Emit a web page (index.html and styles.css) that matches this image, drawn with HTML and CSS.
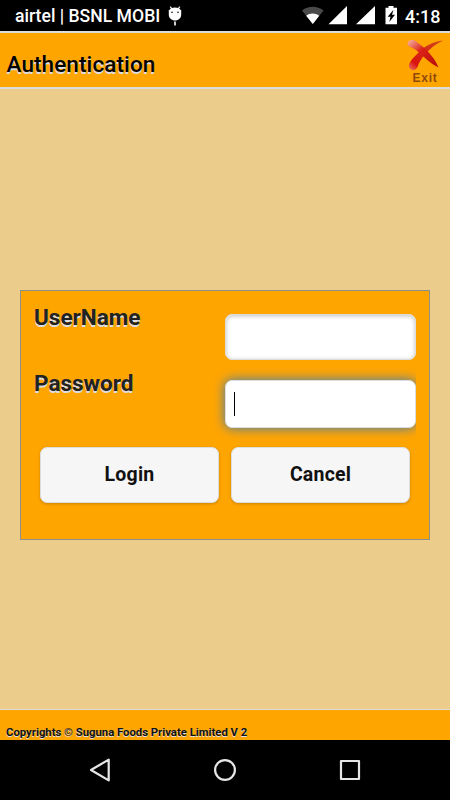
FILE: index.html
```
<!DOCTYPE html>
<html lang="en">
<head>
  <meta charset="UTF-8">
  <title>Authentication</title>
  <link rel="stylesheet" href="styles.css">
</head>
<body>

  <!-- Status bar -->
  <div class="status-bar">
    <span class="carrier">airtel | BSNL MOBI</span>
    <svg class="droid" width="14" height="20" viewBox="0 0 14 20">
      <path d="M2.2 0.6L4 3M11.8 0.6L10 3" stroke="#fff" stroke-width="1.2"/>
      <path d="M3 2.2Q7 0.8 11 2.2L13.2 4.5V8.5C13.2 12 10.5 14.5 7 14.5S0.8 12 0.8 8.5V4.5Z" fill="#fff"/>
      <circle cx="4" cy="6.3" r="0.8" fill="#000"/>
      <circle cx="10" cy="6.3" r="0.8" fill="#000"/>
      <path d="M7 15.5V19.5" stroke="#fff" stroke-width="1.6"/>
    </svg>
    <svg class="signals" width="96" height="20" viewBox="0 0 96 20">
      <path d="M0 4.6C6.5-0.4 15-0.4 21.5 4.6L10.8 18Z" fill="#4a4a4a"/>
      <path d="M4.2 9.8C8.2 6.8 13.2 6.8 17.2 9.8L10.8 18Z" fill="#fff"/>
      <path d="M26.5 18.3H45V0Z" fill="#fff"/>
      <path d="M54 18.3H73V0Z" fill="#fff"/>
      <path d="M83.5 1.8H86.5V0H91.5V1.8H95V18.3H83.5Z" fill="#fff"/>
      <path d="M91.5 3.8L85.6 10.8H88.5L87.3 16L93 8.8H90Z" fill="#000"/>
    </svg>
    <span class="clock">4:18</span>
  </div>

  <!-- Header -->
  <div class="header">
    <h1>Authentication</h1>
    <div class="exit">
      <svg width="38" height="32" viewBox="0 0 38 32">
        <defs>
          <linearGradient id="red" x1="0" y1="0" x2="1" y2="1">
            <stop offset="0" stop-color="#f7b9a6"/>
            <stop offset="0.4" stop-color="#dc2218"/>
            <stop offset="1" stop-color="#b50c08"/>
          </linearGradient>
          <linearGradient id="red2" x1="1" y1="0" x2="0" y2="1">
            <stop offset="0" stop-color="#cf4a1c"/>
            <stop offset="0.8" stop-color="#d9130e"/>
            <stop offset="1" stop-color="#ec7468"/>
          </linearGradient>
        </defs>
        <path d="M37 1.5C27 2.5 19 7 13 13C7 19 3 23 3 27C3.5 32 9.5 32 11.5 28C14 20 23 8 37 1.5Z" fill="url(#red2)"/>
        <path d="M1.5 4.5C2 1 7 0 10 2.5C18 8 28 17 32.5 28.5C24 24.5 17 17 10 11C6 8 1.5 8 1.5 4.5Z" fill="url(#red)"/>
      </svg>
      <span>Exit</span>
    </div>
  </div>

  <!-- Login form -->
  <div class="content">
    <form class="login-box">
      <div class="row">
        <label for="user">UserName</label>
        <input id="user" type="text">
      </div>
      <div class="row">
        <label for="pass">Password</label>
        <div class="focus-field"><div class="field"><span class="caret"></span></div></div>
      </div>
      <div class="buttons">
        <button type="button">Login</button>
        <button type="button">Cancel</button>
      </div>
    </form>
  </div>

  <div class="footer">Copyrights © Suguna Foods Private Limited V 2</div>

  <!-- Android navigation -->
  <div class="nav-bar">
    <svg width="450" height="60" viewBox="0 0 450 60" fill="none" stroke="#e6e6e6" stroke-width="2.2">
      <path d="M108.7 19.6V40.4L91 30Z" stroke-linejoin="round"/>
      <circle cx="225" cy="30" r="9.9"/>
      <rect x="341" y="21" width="18" height="18" stroke-linejoin="round"/>
    </svg>
  </div>

</body>
</html>
```
FILE: styles.css
```
* {
  box-sizing: border-box;
}

body {
  margin: 0;
  height: 800px;
  display: flex;
  flex-direction: column;
  overflow: hidden;
  background: #ebcc8b;
  font-family: Roboto, sans-serif;
}

.status-bar {
  height: 31px;
  flex: none;
  display: flex;
  align-items: center;
  padding: 1px 10px 0 15px;
  background: #000;
  color: #fff;
  font-size: 17.6px;
  font-weight: 500;
  white-space: nowrap;
}

.droid {
  margin-left: 8px;
}

.signals {
  margin-left: auto;
}

.clock {
  margin-left: 7px;
  font-size: 18px;
  width: 35px;
}

.header {
  height: 58px;
  flex: none;
  display: flex;
  justify-content: space-between;
  padding: 0 6px 0 6.5px;
  background: #ffa500;
  border-top: 2px solid #ddd;
  border-bottom: 2px solid #ddd;
}

h1 {
  margin: 17px 0 0;
  font-size: 22.5px;
  line-height: 28px;
  font-weight: 500;
  letter-spacing: 0.1px;
  color: #000;
  text-shadow: 0 1.5px 0 #ddd;
}

.exit {
  display: flex;
  flex-direction: column;
  align-items: center;
  padding-top: 6px;
  width: 38px;
}

.exit span {
  margin-top: 1px;
  font: bold 12px/12px "Liberation Sans", sans-serif;
  letter-spacing: 0.8px;
  color: #8f4a0b;
}

.content {
  flex: 1;
  padding: 201px 20px 0;
}

.login-box {
  height: 250px;
  padding: 12px 13px 0;
  background: #ffa500;
  border: 1px solid #8c8f8c;
}

.row {
  display: flex;
  justify-content: space-between;
  height: 66px;
}

label {
  font-size: 22.5px;
  line-height: 28px;
  font-weight: 700;
  color: #222;
  text-shadow: 0 1.5px 0 #ddd;
}

input,
.field {
  width: 191.5px;
  border: 1px solid #ddd;
  border-radius: 7px;
  background: #fff;
}

input {
  height: 46px;
  margin: 11px 0 0;
  outline: none;
  box-shadow: inset 0 1px 4px rgba(0, 0, 0, 0.25);
}

/* the glow is cut off on the right side of the field */
.focus-field {
  margin: -2px 0 0 -12px;
  padding: 13px 0 18px 12px;
  height: 78px;
  overflow: hidden;
}

.field {
  height: 48px;
  padding: 11px 0 0 8px;
  box-shadow: 0 0 12px #387bbe;
}

.caret {
  display: block;
  width: 1px;
  height: 24px;
  background: #000;
}

.buttons {
  display: flex;
  gap: 12px;
  padding: 12px 6px 0;
}

button {
  flex: 1;
  height: 56px;
  padding: 0 0 1px;
  border: 1px solid #ddd;
  border-radius: 7px;
  background: #f6f6f6;
  box-shadow: 0 1px 3px rgba(0, 0, 0, 0.2);
  color: #111;
  font: 700 19.5px Roboto, sans-serif;
  letter-spacing: 0.2px;
}

.footer {
  height: 31px;
  flex: none;
  padding: 15px 6px 0;
  background: #ffa500;
  border-top: 1px solid #ddd;
  font-size: 11.3px;
  line-height: 15px;
  font-weight: 700;
  color: #111;
  text-shadow: 0 1px 0 #ddd;
}

.nav-bar {
  height: 60px;
  flex: none;
  background: #000;
}
```
